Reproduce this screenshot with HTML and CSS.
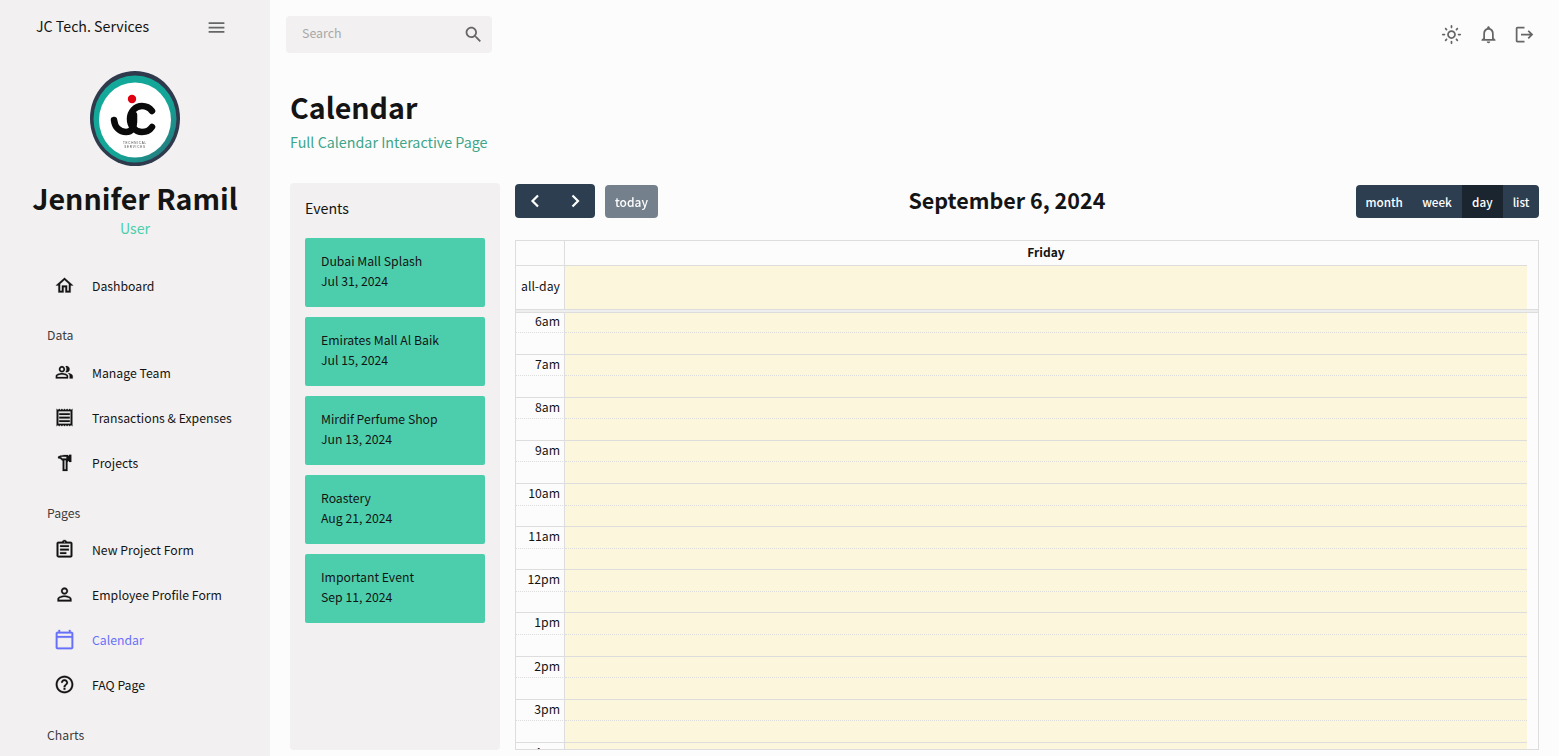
FILE: index.html
```html
<!DOCTYPE html>
<html lang="en">
<head>
<meta charset="utf-8">
<title>Calendar</title>
<link rel="stylesheet" href="styles.css">
</head>
<body>
<div class="app">
  <aside class="sidebar">
    <div class="brand">
      <span class="brand-name">JC Tech. Services</span>
      <svg class="icon menu-icon" viewBox="0 0 24 24"><path d="M3 18h18v-2H3v2zm0-5h18v-2H3v2zm0-7v2h18V6H3z"/></svg>
    </div>
    <div class="profile">
      <svg class="logo" viewBox="0 0 90 96">
        <defs><linearGradient id="ring" x1="0" y1="0" x2="1" y2="1"><stop offset="0" stop-color="#12ab9b"/><stop offset=".6" stop-color="#14a597"/><stop offset="1" stop-color="#2b6d74"/></linearGradient></defs>
        <ellipse cx="45" cy="47.5" rx="45" ry="47.5" fill="#2f3a4d"/>
        <ellipse cx="45" cy="48" rx="41.5" ry="43.5" fill="url(#ring)"/>
        <ellipse cx="45" cy="49" rx="36" ry="37.5" fill="#fff"/>
        <circle cx="42" cy="28" r="4.2" fill="#e0000f"/>
        <path d="M24 49c1 8 6 12 12 12 6 0 8-5 8-10v-7" fill="none" stroke="#0a0a0a" stroke-width="6.5" stroke-linecap="round"/>
        <path d="M62 40c-3-4-6-5-10-5-7 0-12 6-12 13s5 13 12 13c4 0 8-2 10-5" fill="none" stroke="#0a0a0a" stroke-width="6.5" stroke-linecap="round"/>
        <text class="logo-text" x="45" y="73" text-anchor="middle">TECHNICAL</text>
        <text class="logo-text" x="45" y="77" text-anchor="middle">SERVICES</text>
      </svg>
      <h2 class="profile-name">Jennifer Ramil</h2>
      <div class="profile-role">User</div>
    </div>
    <nav class="nav">
      <a class="nav-item"><svg class="icon" viewBox="0 0 24 24"><path d="M12 5.69l5 4.5V18h-2v-6H9v6H7v-7.81l5-4.5M12 3L2 12h3v8h6v-6h2v6h6v-8h3L12 3z"/></svg><span>Dashboard</span></a>
      <div class="nav-label nav-label-first">Data</div>
      <a class="nav-item"><svg class="icon icon-team" viewBox="0 0 24 24"><path d="M16.67 13.13C18.04 14.06 19 15.32 19 17v3h4v-3c0-2.18-3.57-3.47-6.33-3.87z"/><path d="M15 12c2.21 0 4-1.79 4-4s-1.79-4-4-4c-.47 0-.91.1-1.33.24C14.5 5.27 15 6.58 15 8s-.5 2.73-1.33 3.76c.42.14.86.24 1.33.24z"/><path d="M9 12c2.21 0 4-1.79 4-4s-1.79-4-4-4-4 1.79-4 4 1.79 4 4 4zm0-6c1.1 0 2 .9 2 2s-.9 2-2 2-2-.9-2-2 .9-2 2-2z"/><path d="M9 13c-2.67 0-8 1.34-8 4v3h16v-3c0-2.66-5.33-4-8-4zm6 5H3v-.99C3.2 16.29 6.3 15 9 15s5.8 1.29 6 2z"/></svg><span>Manage Team</span></a>
      <a class="nav-item"><svg class="icon" viewBox="0 0 24 24"><path d="M19.5 3.5L18 2l-1.5 1.5L15 2l-1.5 1.5L12 2l-1.5 1.5L9 2 7.5 3.5 6 2 4.5 3.5 3 2v20l1.5-1.5L6 22l1.5-1.5L9 22l1.5-1.5L12 22l1.5-1.5L15 22l1.5-1.5L18 22l1.5-1.5L21 22V2l-1.5 1.5zM19 19.09H5V4.91h14v14.18zM6 15h12v2H6zm0-4h12v2H6zm0-4h12v2H6z"/></svg><span>Transactions &amp; Expenses</span></a>
      <a class="nav-item"><svg class="icon" viewBox="0 0 24 24"><path fill-rule="evenodd" d="M4.6 5.4C6.8 3.9 9.5 3.4 16 3.4v1h1.2V3.2h2.6v8.2h-2.6v-1.2H16v1h-.6v10.5H9.9V9.6H9C8.2 8.2 6.5 7.3 4.6 7.2V5.4zM8.6 5.5c-.6.1-1 .2-1.4.3.9.4 1.7.9 2.4 1.7h4.6v-2H8.6zM11.8 9.5v10.3h1.7V9.5h-1.7z"/></svg><span>Projects</span></a>
      <div class="nav-label">Pages</div>
      <a class="nav-item"><svg class="icon" viewBox="0 0 24 24"><path d="M7 15h7v2H7zm0-4h10v2H7zm0-4h10v2H7zm12-4h-4.18C14.4 1.84 13.3 1 12 1c-1.3 0-2.4.84-2.82 2H5c-.14 0-.27.01-.4.04-.39.08-.74.28-1.01.55-.18.18-.33.4-.43.64-.1.23-.16.49-.16.77v14c0 .27.06.54.16.78s.25.45.43.64c.27.27.62.47 1.01.55.13.02.26.03.4.03h14c1.1 0 2-.9 2-2V5c0-1.1-.9-2-2-2zm-7-.25c.41 0 .75.34.75.75s-.34.75-.75.75-.75-.34-.75-.75.34-.75.75-.75zM19 19H5V5h14v14z"/></svg><span>New Project Form</span></a>
      <a class="nav-item"><svg class="icon" viewBox="0 0 24 24"><path d="M12 5.9c1.16 0 2.1.94 2.1 2.1s-.94 2.1-2.1 2.1S9.9 9.16 9.9 8s.94-2.1 2.1-2.1m0 9c2.97 0 6.1 1.46 6.1 2.1v1.1H5.9V17c0-.64 3.13-2.1 6.1-2.1M12 4C9.79 4 8 5.79 8 8s1.79 4 4 4 4-1.79 4-4-1.79-4-4-4zm0 9c-2.67 0-8 1.34-8 4v3h16v-3c0-2.66-5.33-4-8-4z"/></svg><span>Employee Profile Form</span></a>
      <a class="nav-item active"><svg class="icon" viewBox="0 0 24 24"><path d="M20 3h-1V1h-2v2H7V1H5v2H4c-1.1 0-2 .9-2 2v16c0 1.1.9 2 2 2h16c1.1 0 2-.9 2-2V5c0-1.1-.9-2-2-2zm0 18H4V10h16v11zm0-13H4V5h16v3z"/></svg><span>Calendar</span></a>
      <a class="nav-item"><svg class="icon" viewBox="0 0 24 24"><path d="M11 18h2v-2h-2v2zm1-16C6.48 2 2 6.48 2 12s4.48 10 10 10 10-4.48 10-10S17.52 2 12 2zm0 18c-4.41 0-8-3.59-8-8s3.59-8 8-8 8 3.59 8 8-3.59 8-8 8zm0-14c-2.21 0-4 1.79-4 4h2c0-1.1.9-2 2-2s2 .9 2 2c0 2-3 1.75-3 5h2c0-2.25 3-2.5 3-5 0-2.21-1.79-4-4-4z"/></svg><span>FAQ Page</span></a>
      <div class="nav-label">Charts</div>
    </nav>
  </aside>
  <main class="main">
    <header class="topbar">
      <div class="search">
        <span class="search-text">Search</span>
        <svg class="icon search-icon" viewBox="0 0 24 24"><path d="M15.5 14h-.79l-.28-.27C15.41 12.59 16 11.11 16 9.5 16 5.91 13.09 3 9.5 3S3 5.91 3 9.5 5.91 16 9.5 16c1.61 0 3.09-.59 4.23-1.57l.27.28v.79l5 4.99L20.49 19l-4.99-5zm-6 0C7.01 14 5 11.99 5 9.5S7.01 5 9.5 5 14 7.01 14 9.5 11.99 14 9.5 14z"/></svg>
      </div>
      <div class="top-icons">
        <svg class="icon" viewBox="0 0 24 24"><path d="M12 9c1.65 0 3 1.35 3 3s-1.35 3-3 3-3-1.35-3-3 1.35-3 3-3m0-2c-2.76 0-5 2.24-5 5s2.24 5 5 5 5-2.24 5-5-2.24-5-5-5zM2 13h2c.55 0 1-.45 1-1s-.45-1-1-1H2c-.55 0-1 .45-1 1s.45 1 1 1zm18 0h2c.55 0 1-.45 1-1s-.45-1-1-1h-2c-.55 0-1 .45-1 1s.45 1 1 1zM11 2v2c0 .55.45 1 1 1s1-.45 1-1V2c0-.55-.45-1-1-1s-1 .45-1 1zm0 18v2c0 .55.45 1 1 1s1-.45 1-1v-2c0-.55-.45-1-1-1s-1 .45-1 1zM5.99 4.58c-.39-.39-1.03-.39-1.41 0-.39.39-.39 1.03 0 1.41l1.06 1.06c.39.39 1.03.39 1.41 0s.39-1.03 0-1.41L5.99 4.58zm12.37 12.37c-.39-.39-1.03-.39-1.41 0-.39.39-.39 1.03 0 1.41l1.06 1.06c.39.39 1.03.39 1.41 0 .39-.39.39-1.03 0-1.41l-1.06-1.06zm1.06-10.96c.39-.39.39-1.03 0-1.41-.39-.39-1.03-.39-1.41 0l-1.06 1.06c-.39.39-.39 1.03 0 1.41s1.03.39 1.41 0l1.06-1.06zM7.05 18.36c.39-.39.39-1.03 0-1.41-.39-.39-1.03-.39-1.41 0l-1.06 1.06c-.39.39-.39 1.03 0 1.41s1.03.39 1.41 0l1.06-1.06z"/></svg>
        <svg class="icon" viewBox="0 0 24 24"><path d="M12 22c1.1 0 2-.9 2-2h-4c0 1.1.9 2 2 2zm6-6v-5c0-3.07-1.63-5.64-4.5-6.32V4c0-.83-.67-1.5-1.5-1.5s-1.5.67-1.5 1.5v.68C7.64 5.36 6 7.92 6 11v5l-2 2v1h16v-1l-2-2zm-2 1H8v-6c0-2.48 1.51-4.5 4-4.5s4 2.02 4 4.5v6z"/></svg>
        <svg class="icon icon-exit" viewBox="0 0 24 24"><path d="M17 7l-1.41 1.41L18.17 11H8v2h10.17l-2.58 2.58L17 17l5-5zM4 5h8V3H4c-1.1 0-2 .9-2 2v14c0 1.1.9 2 2 2h8v-2H4V5z"/></svg>
      </div>
    </header>
    <div class="page">
      <div class="page-head">
        <h1 class="page-title">Calendar</h1>
        <p class="page-sub">Full Calendar Interactive Page</p>
      </div>
      <div class="columns">
        <section class="events">
          <h3 class="events-title">Events</h3>
          <div class="event-card"><div>Dubai Mall Splash</div><div>Jul 31, 2024</div></div>
          <div class="event-card"><div>Emirates Mall Al Baik</div><div>Jul 15, 2024</div></div>
          <div class="event-card"><div>Mirdif Perfume Shop</div><div>Jun 13, 2024</div></div>
          <div class="event-card"><div>Roastery</div><div>Aug 21, 2024</div></div>
          <div class="event-card"><div>Important Event</div><div>Sep 11, 2024</div></div>
        </section>
        <section class="calendar">
          <div class="toolbar">
            <div class="tool-left">
              <div class="btn-group">
                <button class="btn btn-arrow"><svg viewBox="0 0 16 16"><path d="M11 2.5L5.5 8l5.5 5.5"/></svg></button>
                <button class="btn btn-arrow"><svg viewBox="0 0 16 16"><path d="M5.5 2.5L11 8l-5.5 5.5"/></svg></button>
              </div>
              <button class="btn btn-today">today</button>
            </div>
            <h2 class="cal-title">September 6, 2024</h2>
            <div class="btn-group btn-group-views">
              <button class="btn">month</button>
              <button class="btn">week</button>
              <button class="btn btn-active">day</button>
              <button class="btn btn-list">list</button>
            </div>
          </div>
          <div class="grid">
            <div class="row head-row"><div class="axis"></div><div class="lane head-lane">Friday</div></div>
            <div class="row allday-row"><div class="axis">all-day</div><div class="lane today"></div></div>
            <div class="divider"></div>
            <div class="row slot first"><div class="axis">6am</div><div class="lane today"></div></div>
            <div class="row slot minor"><div class="axis"></div><div class="lane today"></div></div>
            <div class="row slot"><div class="axis">7am</div><div class="lane today"></div></div>
            <div class="row slot minor"><div class="axis"></div><div class="lane today"></div></div>
            <div class="row slot"><div class="axis">8am</div><div class="lane today"></div></div>
            <div class="row slot minor"><div class="axis"></div><div class="lane today"></div></div>
            <div class="row slot"><div class="axis">9am</div><div class="lane today"></div></div>
            <div class="row slot minor"><div class="axis"></div><div class="lane today"></div></div>
            <div class="row slot"><div class="axis">10am</div><div class="lane today"></div></div>
            <div class="row slot minor"><div class="axis"></div><div class="lane today"></div></div>
            <div class="row slot"><div class="axis">11am</div><div class="lane today"></div></div>
            <div class="row slot minor"><div class="axis"></div><div class="lane today"></div></div>
            <div class="row slot"><div class="axis">12pm</div><div class="lane today"></div></div>
            <div class="row slot minor"><div class="axis"></div><div class="lane today"></div></div>
            <div class="row slot"><div class="axis">1pm</div><div class="lane today"></div></div>
            <div class="row slot minor"><div class="axis"></div><div class="lane today"></div></div>
            <div class="row slot"><div class="axis">2pm</div><div class="lane today"></div></div>
            <div class="row slot minor"><div class="axis"></div><div class="lane today"></div></div>
            <div class="row slot"><div class="axis">3pm</div><div class="lane today"></div></div>
            <div class="row slot minor"><div class="axis"></div><div class="lane today"></div></div>
            <div class="row slot"><div class="axis">4pm</div><div class="lane today"></div></div>
          </div>
        </section>
      </div>
    </div>
  </main>
</div>
</body>
</html>
```
FILE: styles.css
```css
* { box-sizing: border-box; }
html, body { margin: 0; height: 100%; overflow: hidden; }
body {
  font-family: "Noto Sans CJK SC", "Source Sans Pro", "Noto Sans", sans-serif;
  font-size: 12.25px;
  line-height: 20px;
  color: #141414;
  background: #fcfcfc;
}
h1, h2, h3, p { margin: 0; font-weight: inherit; }
.app { display: flex; height: 756px; overflow: hidden; }
.icon { width: 21px; height: 21px; fill: currentColor; flex: none; display: block; }

.sidebar { width: 270px; flex: none; background: #f2f0f0; display: flex; flex-direction: column; overflow: hidden; }
.brand { height: 54px; display: flex; align-items: center; justify-content: space-between; padding: 0 43px 0 36px; }
.brand-name { font-size: 14.2px; color: #141414; margin-top: -2px; }
.menu-icon { color: #666; }
.profile { display: flex; flex-direction: column; align-items: center; }
.logo { width: 90px; height: 96px; margin-top: 17px; filter: blur(.5px); }
.logo-text { font-size: 3px; letter-spacing: .8px; fill: #444; font-family: "Liberation Sans", sans-serif; }
.profile-name { font-size: 28.6px; line-height: 36px; font-weight: 700; margin-top: 13px; }
.profile-role { font-size: 14.2px; line-height: 20px; color: #4cceac; margin-top: 2px; }
.nav { margin-top: 25px; display: flex; flex-direction: column; }
.nav-item { height: 45px; display: flex; align-items: center; padding-left: 54px; gap: 17px; font-size: 12.25px; color: #141414; }
.nav-item .icon { stroke: currentColor; stroke-width: .25; }
.nav-item .icon-team { width: 18.5px; height: 18.5px; margin: 0 1.25px; }
.nav-item.active { color: #6870fa; }
.nav-label { height: 20px; margin: 18px 0 4px 47px; font-size: 12.25px; color: #3d3d3d; }
.nav-label-first { margin-top: 17px; margin-bottom: 5px; }

.main { flex: 1; min-width: 0; display: flex; flex-direction: column; }
.topbar { display: flex; justify-content: space-between; align-items: center; padding: 16px 24px 0 16px; }
.search { width: 206px; height: 37px; background: #f2f0f0; border-radius: 4px; display: flex; align-items: center; justify-content: space-between; padding: 0 8px 0 16px; }
.search-text { font-size: 12.4px; color: #a8a8a8; margin-top: -4px; }
.search-icon { color: #666; }
.top-icons { display: flex; gap: 16px; color: #666; }
.icon-exit { margin-left: -.5px; }
.page { flex: 1; min-height: 0; padding: 0 20px 6px; display: flex; flex-direction: column; }
.page-head { padding-top: 34px; height: 130px; }
.page-title { font-size: 28.6px; line-height: 40px; font-weight: 700; }
.page-sub { font-size: 14.3px; line-height: 20px; color: #3da58a; margin-top: 5px; }
.columns { flex: 1; min-height: 0; display: flex; gap: 15px; }
.events { width: 210px; flex: none; background: #f2f0f0; border-radius: 4px; padding: 15px; display: flex; flex-direction: column; gap: 10px; }
.events-title { font-size: 14.2px; line-height: 22px; margin: -1px 0 9px; }
.event-card { height: 69px; background: #4cceac; border-radius: 2px; padding: 13px 16px; display: flex; flex-direction: column; gap: 0; font-size: 12.25px; line-height: 20px; }
.calendar { flex: 1; min-width: 0; display: flex; flex-direction: column; }
.toolbar { height: 35px; margin-top: 1px; display: flex; align-items: flex-start; justify-content: space-between; margin-bottom: 21px; }
.tool-left { display: flex; gap: 10px; align-items: flex-start; height: 34px; }
.btn-group { display: flex; height: 34px; border-radius: 4px; overflow: hidden; }
.btn-group-views { height: 33px; margin-top: 1px; }
.btn { border: 0; background: #2c3e50; color: #fff; font-family: inherit; font-size: 11.7px; font-weight: 500; padding: 0 9.7px; line-height: 20px; height: 100%; }
.btn-arrow { width: 40px; padding: 0; display: flex; align-items: center; justify-content: center; }
.btn-arrow svg { width: 16px; height: 16px; fill: none; stroke: #fff; stroke-width: 2.2; }
.btn-today { font-size: 12px; opacity: .65; border-radius: 4px; margin-top: 1px; height: 33px; padding: 0 10px; width: 53px; }
.btn-active { background: #1a252f; padding: 0 10.6px; }
.btn-list { padding: 0 9.5px; }
.cal-title { font-size: 21.5px; line-height: 30px; font-weight: 700; margin-top: 1px; }
.grid { flex: 1; min-height: 0; overflow: hidden; border: 1px solid #ddd; }
.row { display: flex; padding-right: 11px; }
.axis { width: 49px; flex: none; border-right: 1px solid #ddd; text-align: right; padding-right: 4px; font-size: 12.25px; line-height: 20px; }
.lane { flex: 1; }
.today { background: #fcf7dc; }
.head-row { height: 24px; }
.head-lane { text-align: center; font-weight: 700; font-size: 12px; line-height: 22px; }
.allday-row { height: 44px; }
.allday-row .lane { border-top: 1px solid #ddd; }
.allday-row .axis { border-top: 1px solid #ddd; line-height: 41px; }
.divider { height: 4px; background: #eee; border-top: 1px solid #ddd; border-bottom: 1px solid #ddd; }
.slot { height: 21.42px; }
.slot .axis, .slot .lane { border-top: 1px solid #ddd; }
.slot .axis { line-height: 18px; }
.minor { height: 21.7px; }
.minor .axis, .minor .lane { border-top: 1px dotted #ddd; }
.first { height: 19px; }
.first + .minor { height: 21.85px; }
.first .axis, .first .lane { border-top: 0; }
.first .axis { line-height: 16px; }
```
